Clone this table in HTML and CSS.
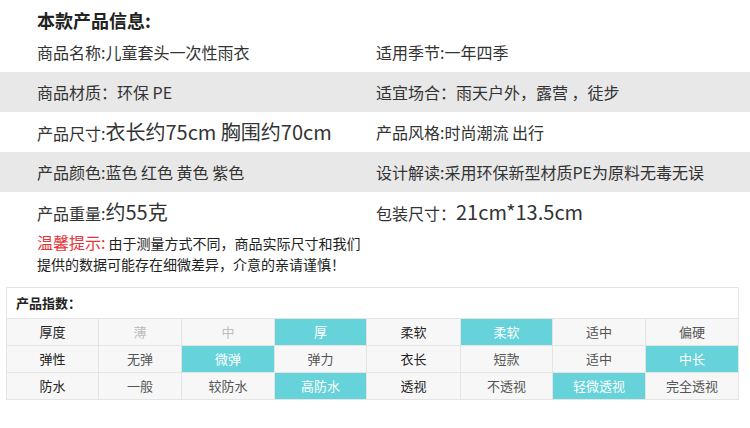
FILE: index.html
```html
<!DOCTYPE html>
<html lang="zh-CN">
<head>
<meta charset="utf-8">
<title>本款产品信息</title>
<link rel="stylesheet" href="styles.css">
</head>
<body>
<div class="page">
  <h1 class="title">本款产品信息:</h1>
  <div class="info">
    <div class="row">
      <div class="cell">商品名称:儿童套头一次性雨衣</div>
      <div class="cell">适用季节:一年四季</div>
    </div>
    <div class="row gray">
      <div class="cell">商品材质：环保 PE</div>
      <div class="cell">适宜场合：雨天户外，露营 ，徒步</div>
    </div>
    <div class="row">
      <div class="cell">产品尺寸:<span class="big">衣长约75cm 胸围约70cm</span></div>
      <div class="cell">产品风格:时尚潮流 出行</div>
    </div>
    <div class="row gray">
      <div class="cell">产品颜色:蓝色 红色 黄色 紫色</div>
      <div class="cell">设计解读:采用环保新型材质PE为原料无毒无误</div>
    </div>
    <div class="row">
      <div class="cell">产品重量:<span class="big">约55克</span></div>
      <div class="cell">包装尺寸：<span class="big">21cm*13.5cm</span></div>
    </div>
  </div>
  <p class="notice"><span class="red">温馨提示:</span> 由于测量方式不同，商品实际尺寸和我们<br>提供的数据可能存在细微差异，介意的亲请谨慎！</p>

  <table class="index">
    <colgroup>
      <col class="c1"><col class="c2"><col class="c3"><col class="c4">
      <col class="c5"><col class="c6"><col class="c7"><col class="c8">
    </colgroup>
    <tr class="head"><td colspan="8">产品指数：</td></tr>
    <tr>
      <td class="label">厚度</td><td class="dim">薄</td><td class="dim">中</td><td class="on">厚</td>
      <td class="label">柔软</td><td class="on">柔软</td><td>适中</td><td>偏硬</td>
    </tr>
    <tr>
      <td class="label">弹性</td><td>无弹</td><td class="on">微弹</td><td>弹力</td>
      <td class="label">衣长</td><td>短款</td><td>适中</td><td class="on">中长</td>
    </tr>
    <tr>
      <td class="label">防水</td><td>一般</td><td>较防水</td><td class="on">高防水</td>
      <td class="label">透视</td><td>不透视</td><td class="on">轻微透视</td><td>完全透视</td>
    </tr>
  </table>
</div>
</body>
</html>
```

FILE: styles.css
```css
* { box-sizing: border-box; }
html, body {
  margin: 0;
  padding: 0;
  background: #ffffff;
}
body {
  font-family: "Noto Sans CJK SC", "Noto Sans", sans-serif;
  color: #333333;
  width: 750px;
  height: 428px;
  overflow: hidden;
}
.page {
  padding-top: 10px;
}
.title {
  margin: 0 0 2px 37px;
  font-size: 18px;
  line-height: 20px;
  font-weight: bold;
  color: #222222;
}
.info {
  display: flex;
  flex-direction: column;
}
.row {
  display: grid;
  grid-template-columns: 339px 1fr;
  height: 40px;
  align-items: center;
  padding-left: 37px;
}
.row.gray {
  background: #e8e8e8;
}
.cell {
  font-size: 16px;
  line-height: 22px;
  white-space: nowrap;
  color: #333333;
}
.big {
  font-size: 20px;
}
.notice {
  margin: 0 0 12px 37px;
  font-size: 14px;
  line-height: 21px;
  color: #222222;
}
.red {
  color: #e6343a;
  font-size: 16px;
}
.index {
  margin-left: 6px;
  width: 732px;
  table-layout: fixed;
  border-collapse: collapse;
  border: 1px solid #e2e2e2;
  font-size: 13px;
}
.c1 { width: 92px; }
.c2 { width: 83px; }
.c3 { width: 93px; }
.c4 { width: 92px; }
.c5 { width: 94px; }
.c6 { width: 92px; }
.c7 { width: 93px; }
.c8 { width: 93px; }
.index td {
  border: 1px solid #e4e4e4;
  background: #f7f7f7;
  text-align: center;
  height: 27px;
  padding: 0;
  color: #555555;
  line-height: 18px;
}
.index tr.head td {
  background: #ffffff;
  text-align: left;
  padding-left: 9px;
  height: 31px;
  color: #222222;
  font-weight: bold;
}
.index td.label {
  color: #222222;
}
.index td.dim {
  color: #bdbdbd;
}
.index td.on {
  background: #66d2d9;
  color: #ffffff;
}
```
